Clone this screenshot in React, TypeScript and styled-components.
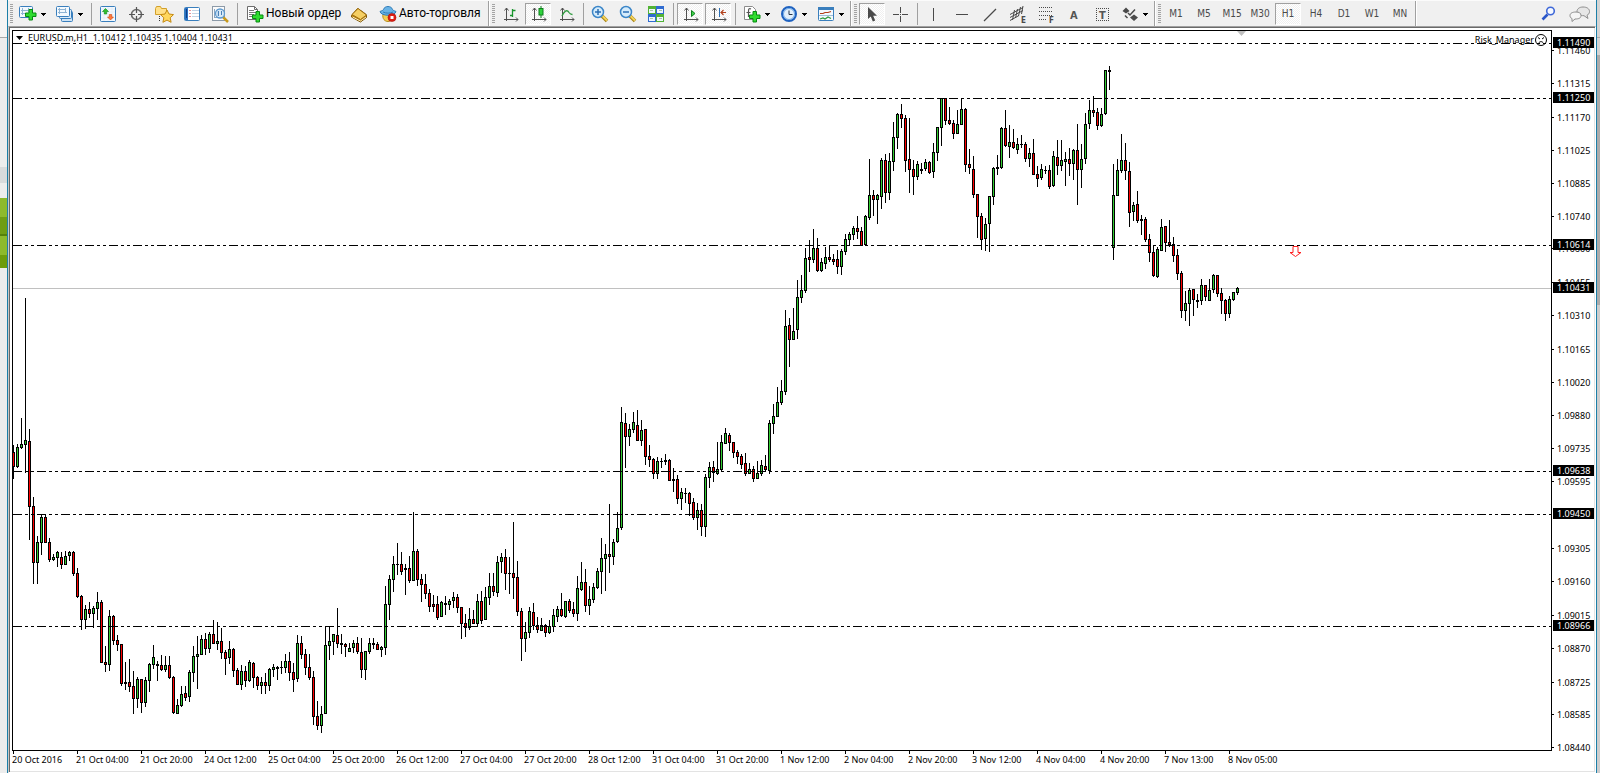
import React from 'react';
import styled, { createGlobalStyle, css } from 'styled-components';

const GlobalStyle = createGlobalStyle`
  * { box-sizing: border-box; }
  body { margin: 0; background: #fff; }
  button { font: inherit; color: inherit; }
`;

const CHART_FONT = '"Noto Sans", "DejaVu Sans Condensed", sans-serif';
const UI_FONT = '"DejaVu Sans Condensed", "DejaVu Sans", sans-serif';
const CAPTION_FONT = 'Roboto, "Open Sans", sans-serif';

/* ---------- window ---------- */

const Page = styled.div`
  display: flex;
  min-height: 100vh;
  font-family: ${CHART_FONT};
  font-size: 9px;
  color: #000;
`;

const DesktopLeft = styled.div`
  flex: none;
  width: 7px;
  background: linear-gradient(
    #f4f4f4 0 37px, #a8a8a8 37px 38px, #ededed 38px 167px, #d9dbdc 167px 183px,
    #ededed 183px 198px, #8dba2c 198px 217px, #6f9d14 217px 234px, #55800a 234px 236px,
    #8dba2c 236px 255px, #6d9c0c 255px 268px, #ededed 268px
  );
`;

const DesktopRight = styled.div`
  flex: none;
  width: 3px;
  background: linear-gradient(
    #d4d4d4 0 37px, #a8a8a8 37px 38px, #d4d4d4 38px 55px, #ababab 55px 305px, #cdcdcd 305px
  );
`;

const Window = styled.main`
  flex: 1;
  min-width: 0;
  display: flex;
  flex-direction: column;
  border: solid #1c7fa8;
  border-width: 0 1px;
  background: #fff;
`;

/* ---------- toolbar ---------- */

const Toolbar = styled.header`
  display: flex;
  align-items: center;
  height: 26px;
  padding-right: 2px;
  background: #f0f0f0;
  border-top: 1px solid #fbfbfb;
`;

const Group = styled.div`
  display: flex;
  align-items: center;
  height: 25px;
  padding-right: 1px;
  border-right: 1px solid #a0a0a0;
  box-shadow: 1px 0 #fff;
  margin-right: 2px;

  &:first-child {
    padding-left: 1px;
  }
`;

const Gripper = styled.span`
  width: 4px;
  height: 20px;
  margin: 0 0 0 1px;
  border-right: 1px solid #f0f0f0;
  background: repeating-linear-gradient(#a3a3a3 0 1px, #f0f0f0 1px 2px);
`;

const Separator = styled.span`
  width: 1px;
  height: 22px;
  margin: 0 2px 0 3px;
  background: #a0a0a0;
`;

const pressed = css`
  border-color: #a0a0a0 #fff #fff #a0a0a0;
  background: repeating-conic-gradient(#fff 0 25%, #f0f0f0 0 50%) 0 0 / 2px 2px;
`;

const ToolButton = styled.button<{ $pressed?: boolean }>`
  display: flex;
  align-items: center;
  justify-content: center;
  flex: none;
  width: 26px;
  height: 22px;
  margin: 0 1px;
  padding: 1px 0 0;
  border: 1px solid transparent;
  background: none;
  font-family: ${UI_FONT};
  color: #4a4a4a;
  ${(p) => p.$pressed && pressed}
`;

const PeriodButton = styled(ToolButton)`
  font-size: 10px;
  line-height: 12px;
`;

const MenuButton = styled(ToolButton)`
  justify-content: flex-start;
  gap: 4px;
  width: 35px;
  padding-left: 3px;
`;

const CaptionButton = styled(ToolButton)<{ $wide?: boolean }>`
  justify-content: flex-start;
  gap: 2px;
  width: ${(p) => (p.$wide ? 112 : 103)}px;
  padding-left: 4px;
  font-family: ${CAPTION_FONT};
  font-size: 12px;
  line-height: 16px;
  color: #000;
  white-space: nowrap;
`;

const Caption = styled.span`
  padding-bottom: 2px;
`;

const ToolbarEnd = styled.div`
  display: flex;
  gap: 3px;
  margin-left: auto;
`;

const Glyph = styled.svg`
  flex: none;
  display: block;
  overflow: visible;
`;

const Icon = ({ children, w = 18 }: { children: React.ReactNode; w?: number }) => (
  <Glyph width={w} height="18" viewBox={`0 0 ${w} 18`} fill="none" aria-hidden="true">
    {children}
  </Glyph>
);

const Caret = () => (
  <Glyph width="5" height="3" viewBox="0 0 5 3" shapeRendering="crispEdges" aria-hidden="true">
    <path d="M0 0h5v1h-1v1h-1v1h-1v-1h-1v-1h-1z" fill="#000" />
  </Glyph>
);

const Plus = ({ x, y }: { x: number; y: number }) => (
  <path
    transform={`translate(${x} ${y})`}
    d="M4 .5h3.500v3.500h3.500v3.500h-3.500v3.500h-3.500v-3.500h-3.500v-3.500h3.500z"
    fill="#2fdc2f"
    stroke="#078a12"
  />
);

const Frame = ({ x, y, w, h, fill = '#f3f9fe' }: { x: number; y: number; w: number; h: number; fill?: string }) => (
  <rect x={x + 0.5} y={y + 0.5} width={w - 1} height={h - 1} rx="1" fill={fill} stroke="#3a7fbd" />
);

/* Grey L-shaped axes shared by the chart icons; what is drawn inside them shifts along. */
const AxesIcon = ({ children }: { children: React.ReactNode }) => (
  <Icon>
    <g transform="translate(2 0)">
      <g stroke="#505050">
        <path d="M3.500 3v13M1 14.500h14" />
        <path d="M1.500 5.500l2-2.500 2 2.500M13 12.500l2 2-2 2" />
      </g>
      {children}
    </g>
  </Icon>
);

const Lens = ({ minus }: { minus?: boolean }) => (
  <>
    <path d="M10.500 10.500l5.500 5.500" stroke="#a88414" strokeWidth="3.500" />
    <path d="M11 10.500l5 5" stroke="#f3d35a" strokeWidth="2" />
    <circle cx="7" cy="7" r="5.500" fill="#d6ecfb" stroke="#3c86c8" strokeWidth="1.500" />
    <path d={minus ? 'M4 7h6' : 'M4 7h6M7 4v6'} stroke="#2c6fb4" strokeWidth="1.500" />
  </>
);

const NewChartIcon = () => (
  <Icon>
    <Frame x={0} y={1} w={14} h={12} />
    <path d="M3.500 3v7M2 8.500h9M2 5.500h8M9.500 3v4" stroke="#8fb4d4" />
    <Plus x={6} y={4} />
  </Icon>
);
const ProfilesIcon = () => (
  <Icon>
    <Frame x={5} y={6} w={12} h={11} fill="#cfe4f5" />
    <Frame x={3} y={4} w={13} h={10} fill="#dcecf8" />
    <Frame x={0} y={1} w={14} h={11} />
    <path d="M3.500 3v6M2 7.500h9M2 4.500h8M9.500 3v4" stroke="#8fb4d4" />
  </Icon>
);
const MarketWatchIcon = () => (
  <Icon>
    <Frame x={1} y={1} w={16} h={16} />
    <path d="M2 4h14M2 7h14M2 10h14M2 13h14M5 2v14M9 2v14M13 2v14" stroke="#dbe7f0" strokeWidth=".5" />
    <path d="M6.500 3.500l3 3h-1.800v2.500h-2.400v-2.500h-1.800z" fill="#2fc02f" stroke="#0c8a18" strokeWidth=".6" />
    <path d="M11.500 15l-3-3h1.800v-2.500h2.400v2.500h1.800z" fill="#ff7a3c" stroke="#d2430c" strokeWidth=".6" />
  </Icon>
);
const CrosshairIcon = () => (
  <Icon>
    <circle cx="9.500" cy="9.500" r="5" stroke="#6a6a6a" strokeWidth="1.600" />
    <path d="M9.500 2v6M9.500 11v6M2 9.500h6M11 9.500h6" stroke="#555" strokeWidth="1.200" />
  </Icon>
);
const NavigatorIcon = () => (
  <Icon w={20}>
    <path d="M1.500 3.500l1-2h4l1 2h5v6h-11z" fill="#ffe08a" stroke="#d2a02a" />
    <path d="M5.500 11v6" stroke="#333" strokeDasharray="1 1" />
    <path d="M13 5l2 4 4.500.6-3.300 3.200.9 4.500-4.100-2.200-4.100 2.200.9-4.500-3.300-3.200 4.500-.6z" fill="#ffd75e" stroke="#c58a12" />
  </Icon>
);
const TerminalIcon = () => (
  <Icon>
    <Frame x={1} y={2} w={16} h={14} fill="#fff" />
    <rect x="2" y="3" width="3" height="12" fill="#2c72c4" />
    <path d="M6.500 5.500h1M6.500 8.500h1M6.500 11.500h1" stroke="#c23" />
    <path d="M9 5.500h7M9 8.500h7M9 11.500h7" stroke="#c2d4e4" />
    <path d="M3.500 4v9" stroke="#0c3f86" />
  </Icon>
);
const TesterIcon = () => (
  <Icon>
    <rect x="1.500" y="1.500" width="12" height="14" fill="#fbfbfb" stroke="#8c9aa8" />
    <path d="M3.500 4v9M6.500 4v9M3 12.500h9" stroke="#8aa5c0" />
    <path d="M12 12l5 5" stroke="#c99a1c" strokeWidth="2.500" />
    <circle cx="9" cy="8.500" r="4.500" fill="#cfe6f8" fillOpacity=".8" stroke="#5f9bd0" strokeWidth="1.300" />
    <path d="M7.500 6v5M10.500 6v4" stroke="#4a80b8" />
  </Icon>
);
const NewOrderIcon = () => (
  <Icon>
    <path d="M1.500 1.500h7l3 3v10h-10z" fill="#fff" stroke="#6d6d6d" />
    <path d="M8.500 1.500v3h3" stroke="#6d6d6d" />
    <path d="M3 5.500h5M3 7.500h7M3 9.500h5M3 11.500h4" stroke="#777" />
    <Plus x={6} y={6} />
  </Icon>
);
const EditorIcon = () => (
  <Icon>
    <path d="M1.500 10.500l6-7c1 .5 8 5 9 6.500v2.500l-6 4.500-9-5z" fill="#b9820f" stroke="#7d5506" />
    <path d="M2 9.500l6-6 8.500 6.500-6 4.500z" fill="#f5cf63" stroke="#a06f10" />
    <path d="M2.500 12l8 4 5.500-4" stroke="#fbe9b4" />
  </Icon>
);
const AutoTradeIcon = () => (
  <Icon>
    <path d="M4 9c-1 5 2 7.500 5 7.500s6-3 5-7.500z" fill="#f2cd55" stroke="#b98d1a" />
    <path d="M1 6.500c2-1 3-1 3.500-2 1-4 8-4 9 0 .5 1 1.500 1 3.500 2-1 5-15 5-16 0z" fill="#69b3e6" stroke="#2f7cb8" />
    <path d="M4 7c3 1.500 7 1.500 10 0" stroke="#2f7cb8" />
    <circle cx="13" cy="12.500" r="4" fill="#e01f14" stroke="#a80f08" strokeWidth=".6" />
    <rect x="11.500" y="11" width="3" height="3" fill="#fff" />
  </Icon>
);
const BarChartIcon = () => (
  <AxesIcon>
    <path d="M9.500 4v8M7 10.500h2M10 5.500h2.500" stroke="#18942c" strokeWidth="1.300" />
  </AxesIcon>
);
const CandleChartIcon = () => (
  <AxesIcon>
    <path d="M10 1v12" stroke="#0d7f1c" />
    <rect x="8" y="3.500" width="4" height="6.500" fill="#2fd43c" stroke="#0d7f1c" />
  </AxesIcon>
);
const LineChartIcon = () => (
  <AxesIcon>
    <path d="M3 11c2-5 5-7 7-3.500 1 1.500 2 2 3.500 2" stroke="#2c9a3c" strokeWidth="1.300" />
  </AxesIcon>
);
const ZoomInIcon = () => (
  <Icon>
    <Lens />
  </Icon>
);
const ZoomOutIcon = () => (
  <Icon>
    <Lens minus />
  </Icon>
);
const TileIcon = () => (
  <Icon>
    <path d="M1 1h8v8h-8zM9 9h8v8h-8z" fill="#52b335" />
    <path d="M9 1h8v8h-8zM1 9h8v8h-8z" fill="#2f6bd0" />
    <path d="M2 4h6v4h-6zM10 4h6v4h-6zM2 12h6v4h-6zM10 12h6v4h-6z" fill="#eef6ff" />
    <path d="M3 5.500h3M12 5.500h3M3 13.500h3M12 13.500h3" stroke="#a9c6a9" />
  </Icon>
);
const AutoScrollIcon = () => (
  <AxesIcon>
    <path d="M8.500 5.500v6l3.500-3z" fill="#3fd24a" stroke="#0d7f1c" />
  </AxesIcon>
);
const ShiftIcon = () => (
  <AxesIcon>
    <path d="M8.500 3v9" stroke="#2c6fb4" />
    <path d="M10 7.500h5M12.500 5l-2.500 2.500 2.500 2.500" stroke="#b3411c" strokeWidth="1.200" />
  </AxesIcon>
);
const IndicatorsIcon = () => (
  <Icon>
    <path d="M1.500 1.500h8l3 3v10h-11z" fill="#fff" stroke="#8c8c8c" />
    <path d="M8 4c-2-1-2.500 0-2.500 2v6M3.500 7.500h4" stroke="#555" strokeWidth="1.200" />
    <Plus x={6} y={6} />
  </Icon>
);
const PeriodsIcon = () => (
  <Icon>
    <circle cx="9" cy="9" r="7" fill="#e3f0fc" stroke="#1f62c0" strokeWidth="2" />
    <circle cx="9" cy="9" r="5.500" stroke="#6aa6e6" />
    <path d="M9 5.500v4h3.500" stroke="#27364a" />
  </Icon>
);
const TemplateIcon = () => (
  <Icon>
    <Frame x={1} y={2} w={16} h={14} />
    <rect x="1" y="2" width="16" height="3" fill="#3a7fbd" />
    <path d="M3 8.500h3l2-1h3l3-1" stroke="#b3411c" strokeWidth="1.200" />
    <path d="M2 10.500h14" stroke="#9fbdd6" />
    <path d="M3 14l3-1 2 1 3-2 3 1.500" stroke="#2c9a3c" strokeWidth="1.200" />
  </Icon>
);
const CursorIcon = () => (
  <Icon>
    <path d="M5 2v12l2.800-2.500 2 5 2.400-1-2-4.700h3.800z" fill="#4a4a4a" />
  </Icon>
);
const CrossIcon = () => (
  <Icon>
    <path d="M9.500 2v6M9.500 11v6M2 9.500h6M11 9.500h6M9 9.500h1" stroke="#4a4a4a" />
  </Icon>
);
const VLineIcon = () => (
  <Icon>
    <path d="M8.500 3v13" stroke="#4a4a4a" />
  </Icon>
);
const HLineIcon = () => (
  <Icon>
    <path d="M3 9.500h12" stroke="#4a4a4a" />
  </Icon>
);
const TrendIcon = () => (
  <Icon>
    <path d="M3 16l12-12" stroke="#4a4a4a" strokeWidth="1.200" />
  </Icon>
);
const ChannelIcon = () => (
  <Icon>
    <path
      d="M1 9.500l13-7M1 12.500l13-7M1 15.500l9-5M5.500 5l-2 10M8.500 4l-2 9M11.500 2l-2 9M14 1l-1.500 8"
      stroke="#4a4a4a"
    />
    <text x="12" y="18" fontSize="8" fontWeight="bold" fill="#4a4a4a">E</text>
  </Icon>
);
const FibonacciIcon = () => (
  <Icon>
    <path
      d="M2 2.500h14M2 6.500h14M2 10.500h14M2 14.500h8"
      stroke="#4a4a4a"
      strokeDasharray="1 1"
      shapeRendering="crispEdges"
    />
    <text x="12" y="18" fontSize="8" fontWeight="bold" fill="#4a4a4a">F</text>
  </Icon>
);
const TextIcon = () => (
  <Icon>
    <text x="5" y="14" fontSize="11" fontWeight="bold" fill="#555">A</text>
  </Icon>
);
const LabelIcon = () => (
  <Icon>
    <path
      d="M3 3.500h13M3 15.500h13M3.500 3v13M15.500 3v13"
      stroke="#4a4a4a"
      strokeDasharray="1 1"
      shapeRendering="crispEdges"
    />
    <text x="6" y="14" fontSize="11" fontWeight="bold" fill="#555">T</text>
  </Icon>
);
const ArrowsIcon = () => (
  <Icon>
    <path d="M5 2.500l3.500 3.500-3.500 2.500-3.500-2.500zM13 9.500l4 3-4 3.500-4-3.500z" fill="#4a4a4a" />
    <path d="M4 10.500l2.500 2.500M7 8l2 2 5-5.500" stroke="#4a4a4a" strokeWidth="1.500" />
  </Icon>
);
const SearchIcon = () => (
  <Icon>
    <path d="M2.500 14.500l5-5" stroke="#2a56c8" strokeWidth="2.600" />
    <circle cx="10.500" cy="6" r="3.800" fill="#f4f8ff" stroke="#3f68d8" strokeWidth="1.600" />
  </Icon>
);
const ChatIcon = () => (
  <Icon w={22}>
    <path d="M14 2c4 0 6.500 1.800 6.500 4.500 0 2-1 3-2.500 3.700l1 3.300-4-2.800c-4 0-7-1.500-7-4.200s2.500-4.500 6-4.500z" fill="#e6e6e6" stroke="#8d8d8d" />
    <path d="M7 7c-4 0-6 1.500-6 3.500s1 2.500 2 3l0 3 3-2.500c4 0 6-1 6-3.500s-2-3.500-5-3.500z" fill="#f6f6f6" stroke="#8d8d8d" />
  </Icon>
);

/* ---------- chart ---------- */

const ChartFrame = styled.section`
  display: flex;
  flex-direction: column;
  flex: 1;
  padding: 2px 0 0 2px;
  border: 1px solid;
  border-color: #a0a0a0 #fff #fff #c8c8c8;
  box-shadow: inset 1px 1px #696969, inset -1px -1px #e3e3e3;
`;

const ChartBody = styled.div`
  display: flex;
  padding: 1px 1px 0;
`;

const Plot = styled.div`
  position: relative;
  flex: 1;
  min-width: 0;
  height: 721px;
  border: 1px solid #000;
  overflow: hidden;
`;

const PlotSvg = styled.svg`
  display: block;
  width: 100%;
  height: 719px;
`;

const ChartTitle = styled.h1`
  position: absolute;
  top: 1px;
  left: 3px;
  display: flex;
  align-items: center;
  gap: 5px;
  margin: 0;
  font-size: 9px;
  font-weight: normal;
  line-height: 12px;
  white-space: pre;
`;

const Expert = styled.div`
  position: absolute;
  top: 3px;
  right: 4px;
  display: flex;
  align-items: center;
  gap: 1px;
  line-height: 12px;
`;

const PriceAxis = styled.svg`
  flex: none;
  display: block;
  width: 42px;
  height: 721px;
  overflow: visible;
`;

const TimeAxis = styled.ol`
  display: flex;
  height: 20px;
  margin: 0 0 0 1px;
  padding: 0;
  list-style: none;
  overflow: hidden;
`;

const TimeMark = styled.li`
  flex: none;
  width: 64px;
  line-height: 12px;
  white-space: nowrap;

  &::before {
    content: '';
    display: block;
    width: 1px;
    height: 3px;
    margin-left: 1px;
    background: #000;
  }
`;

const PLOT_TOP = 31;
const PITCH = 4;
const TOP_PRICE = 111490;
const TOP_ROW = 42.9;
const ROWS_PER_POINT = 0.231;

const priceRow = (points: number) => Math.round(TOP_ROW + (TOP_PRICE - points) * ROWS_PER_POINT) - 30;
const priceText = (points: number) => (points / 100000).toFixed(5);

const LEVELS = [111490, 111250, 110614, 109638, 109450, 108966];
const BID = 110431;
const SCALE = [
  111460, 111315, 111170, 111025, 110885, 110740, 110600, 110455, 110310, 110165, 110020,
  109880, 109735, 109595, 109305, 109160, 109015, 108870, 108725, 108585, 108440,
];
const TIMES = [
  '20 Oct 2016', '21 Oct 04:00', '21 Oct 20:00', '24 Oct 12:00', '25 Oct 04:00', '25 Oct 20:00',
  '26 Oct 12:00', '27 Oct 04:00', '27 Oct 20:00', '28 Oct 12:00', '31 Oct 04:00', '31 Oct 20:00',
  '1 Nov 12:00', '2 Nov 04:00', '2 Nov 20:00', '3 Nov 12:00', '4 Nov 04:00', '4 Nov 20:00',
  '7 Nov 13:00', '8 Nov 05:00',
];

/* One bar per entry: high, body top, body bottom, low (screen rows), then g = up, r = down, d = flat. */
const BARS = `
445 452 467 479 r,444 447 467 468 g,418 444 448 449 g,298 440 445 473 g,429 441 507 540 r,497 506 563 584 r,
536 542 563 584 g,514 517 543 555 g,514 517 543 543 r,538 542 560 562 r,554 557 560 561 g,551 552 558 567 g,
552 557 565 569 r,551 556 565 565 g,551 552 556 561 g,551 552 574 576 r,568 573 597 598 r,595 596 620 630 r,
605 609 620 629 g,602 609 614 618 r,606 608 614 628 g,592 602 609 620 g,600 602 663 663 r,646 662 665 672 r,
610 616 665 671 g,615 616 641 645 r,635 640 645 651 r,644 644 684 686 r,662 682 684 690 r,659 682 687 692 r,
671 686 699 714 r,677 679 699 708 g,679 679 703 713 r,677 680 703 707 g,663 664 681 692 g,645 657 665 669 g,
661 664 666 681 r,655 665 670 671 r,656 665 670 672 g,656 665 678 679 r,676 677 713 714 r,699 705 714 714 g,
686 694 706 707 g,686 693 698 701 r,670 672 697 702 g,646 656 673 682 g,636 654 657 689 g,635 639 655 655 g,
633 639 649 655 r,632 634 649 653 g,620 634 644 644 r,622 641 644 650 g,628 641 653 659 r,650 652 659 675 r,
641 649 658 664 g,648 649 671 677 r,668 670 685 685 r,665 671 685 690 g,666 671 681 687 r,660 662 681 682 g,
662 663 678 688 r,676 677 686 690 r,677 682 686 694 g,673 682 686 694 r,668 669 686 691 g,664 667 670 677 g,
666 667 669 680 r,661 667 668 674 d,654 661 668 673 g,652 661 673 681 r,663 672 680 692 r,635 643 679 682 g,
636 643 655 659 r,649 654 668 675 r,654 667 678 680 r,671 677 717 725 r,701 716 726 730 r,706 714 726 733 g,
626 645 714 714 g,626 641 646 660 g,634 634 642 655 g,608 635 644 648 r,634 643 645 654 r,643 644 647 657 r,
643 648 652 652 g,640 643 648 653 g,637 643 652 654 r,638 652 670 678 r,651 651 670 680 g,638 643 652 654 g,
638 643 645 649 r,642 644 650 650 r,646 647 650 657 g,586 604 648 655 g,575 579 605 620 g,556 564 580 592 g,
543 564 565 575 d,552 564 572 575 r,564 568 570 595 r,556 568 581 583 r,512 551 581 581 g,549 551 580 586 r,
574 579 585 602 r,574 584 594 599 r,589 593 607 612 r,595 604 607 612 r,596 604 618 620 r,601 602 617 617 g,
596 603 605 615 r,599 601 605 610 g,592 597 601 608 g,594 597 608 613 r,607 607 624 639 r,614 623 628 637 r,
608 619 628 630 g,610 619 624 624 r,594 601 624 627 g,591 601 621 624 r,587 597 620 620 g,573 586 598 605 g,
573 586 592 596 r,556 562 593 597 g,553 557 562 573 g,549 557 574 590 r,557 573 574 594 d,522 573 578 599 r,
561 577 612 616 r,608 611 639 661 r,622 632 639 652 g,607 611 633 638 g,603 612 626 630 r,617 625 630 633 r,
618 625 631 631 g,624 625 633 637 r,620 626 633 634 g,609 615 627 632 g,606 609 617 622 g,593 609 616 617 r,
601 601 617 618 g,599 601 611 613 r,602 609 614 617 r,576 588 614 621 g,562 582 590 591 g,569 582 606 612 r,
586 599 606 615 g,583 587 600 603 g,568 571 588 589 g,538 558 572 594 g,544 554 559 591 g,504 554 557 573 r,
539 542 557 565 g,512 528 542 543 g,407 422 528 530 g,413 423 437 468 r,424 429 437 446 g,412 422 430 433 g,
410 425 441 441 r,420 430 441 446 g,429 429 457 465 r,445 456 460 467 r,458 459 474 479 r,457 461 474 479 g,
458 461 462 468 d,454 460 462 465 r,459 460 481 481 r,468 479 481 492 r,475 479 499 504 r,488 492 499 510 g,
488 493 494 503 d,492 493 504 516 r,498 502 518 520 r,503 510 518 530 g,504 510 527 536 r,474 477 527 537 g,
462 467 478 488 g,461 467 473 482 r,442 469 474 475 g,435 442 470 472 g,428 433 444 444 g,433 435 443 451 r,
442 442 453 458 r,450 452 457 464 r,454 456 465 469 r,453 463 474 476 r,463 469 474 474 g,466 469 479 482 r,
461 473 479 479 g,460 465 474 476 g,455 466 470 471 r,420 423 471 474 g,404 416 424 434 g,387 402 417 417 g,
380 391 403 405 g,310 326 392 395 g,318 325 340 367 r,308 331 340 340 g,280 297 330 339 g,275 290 298 303 g,
248 258 291 293 g,240 257 260 272 r,229 248 260 263 g,238 248 271 272 r,258 262 271 272 g,247 257 264 269 g,
245 257 260 262 r,254 259 262 265 r,250 259 267 274 r,249 251 267 275 g,234 239 252 255 g,232 234 240 245 g,
226 228 235 240 g,216 228 232 239 r,227 231 246 246 r,215 216 245 246 g,159 195 218 220 g,190 195 200 216 r,
194 195 200 224 g,158 160 197 209 g,154 160 193 203 r,153 161 193 200 g,122 137 162 171 g,113 114 138 149 g,
104 114 119 128 r,115 118 161 172 r,118 159 170 193 r,160 169 177 195 r,161 164 177 180 g,163 169 171 174 d,
159 162 169 171 g,161 162 173 174 r,143 152 172 178 g,127 127 153 161 g,98 98 128 146 g,98 98 121 125 r,
107 120 124 125 r,120 123 134 139 r,110 124 134 134 g,98 109 125 125 g,108 109 165 172 r,149 164 168 174 r,
156 169 195 198 r,194 194 217 238 r,213 216 240 250 r,218 224 239 251 g,196 196 224 252 g,167 168 197 205 g,
155 167 169 175 d,127 128 168 169 g,110 128 146 147 r,125 142 147 158 g,129 142 148 149 r,138 144 150 154 g,
135 144 145 148 d,142 144 159 162 r,148 153 159 167 g,139 153 175 175 r,166 174 179 187 r,164 169 178 180 g,
166 170 171 174 d,165 170 187 189 r,151 156 186 187 g,140 157 166 175 r,140 160 166 171 g,152 159 162 186 g,
148 159 164 176 r,149 150 164 180 g,124 150 170 205 r,144 159 170 188 g,113 124 159 164 g,100 110 124 129 g,
96 110 113 117 r,108 112 126 130 r,108 114 126 127 g,70 70 114 115 g,66 70 72 90 d,164 195 248 260 g,
159 170 196 196 g,134 160 171 173 g,143 160 171 180 r,162 171 213 227 r,202 205 212 221 g,191 204 221 223 r,
215 219 221 235 d,217 219 240 242 r,234 239 253 262 r,245 252 276 277 r,247 249 277 278 g,219 227 251 251 g,
226 226 243 252 r,220 242 245 247 r,237 244 256 262 r,249 255 274 280 r,271 273 311 318 r,291 303 311 321 g,
288 290 304 326 g,289 289 300 316 r,294 300 302 308 d,279 285 301 305 g,285 285 297 301 r,279 290 301 301 g,
274 275 290 293 g,275 275 294 297 r,288 293 301 314 r,299 300 314 321 r,296 299 314 318 g,292 292 300 301 g,
287 288 293 295 g`
  .split(',')
  .map((entry) => {
    const [high, top, bottom, low, kind] = entry.trim().split(' ');
    return { high: +high - PLOT_TOP, top: +top - PLOT_TOP, bottom: +bottom - PLOT_TOP, low: +low - PLOT_TOP, kind };
  });

const Candles = () => (
  <g shapeRendering="crispEdges">
    {BARS.map((bar, i) => (
      <React.Fragment key={i}>
        <rect x={i * PITCH} y={bar.high} width="1" height={bar.low - bar.high} />
        <rect x={i * PITCH - 1} y={bar.top} width="3" height={bar.bottom - bar.top} />
        {bar.bottom - bar.top > 2 && (
          <rect
            x={i * PITCH}
            y={bar.top + 1}
            width="1"
            height={bar.bottom - bar.top - 2}
            fill={bar.kind === 'r' ? '#ff0000' : '#32cd32'}
          />
        )}
      </React.Fragment>
    ))}
  </g>
);

const Level = ({ points }: { points: number }) => (
  <line x1="0" x2="100%" y1={priceRow(points) - 0.5} y2={priceRow(points) - 0.5} stroke="#000" strokeDasharray="9 3 3 3 3 3" />
);

const PERIODS = ['M1', 'M5', 'M15', 'M30', 'H1', 'H4', 'D1', 'W1', 'MN'];

export default function App() {
  return (
    <>
      <GlobalStyle />
      <Page>
        <DesktopLeft />
        <Window>
          <Toolbar>
            <Group>
              <Gripper />
              <MenuButton aria-label="New chart"><NewChartIcon /><Caret /></MenuButton>
              <MenuButton aria-label="Profiles"><ProfilesIcon /><Caret /></MenuButton>
              <Separator />
              <ToolButton aria-label="Market watch"><MarketWatchIcon /></ToolButton>
              <ToolButton aria-label="Data window"><CrosshairIcon /></ToolButton>
              <ToolButton aria-label="Navigator"><NavigatorIcon /></ToolButton>
              <ToolButton aria-label="Terminal"><TerminalIcon /></ToolButton>
              <ToolButton aria-label="Strategy tester"><TesterIcon /></ToolButton>
              <Separator />
              <CaptionButton><NewOrderIcon /><Caption>Новый ордер</Caption></CaptionButton>
              <ToolButton aria-label="Editor"><EditorIcon /></ToolButton>
              <CaptionButton $wide><AutoTradeIcon /><Caption>Авто-торговля</Caption></CaptionButton>
            </Group>
            <Group>
              <Gripper />
              <ToolButton aria-label="Bar chart"><BarChartIcon /></ToolButton>
              <ToolButton aria-label="Candlesticks" aria-pressed="true" $pressed><CandleChartIcon /></ToolButton>
              <ToolButton aria-label="Line chart"><LineChartIcon /></ToolButton>
              <Separator />
              <ToolButton aria-label="Zoom in"><ZoomInIcon /></ToolButton>
              <ToolButton aria-label="Zoom out"><ZoomOutIcon /></ToolButton>
              <ToolButton aria-label="Tile windows"><TileIcon /></ToolButton>
              <Separator />
              <ToolButton aria-label="Auto scroll" aria-pressed="true" $pressed><AutoScrollIcon /></ToolButton>
              <ToolButton aria-label="Chart shift" aria-pressed="true" $pressed><ShiftIcon /></ToolButton>
              <Separator />
              <MenuButton aria-label="Indicators"><IndicatorsIcon /><Caret /></MenuButton>
              <MenuButton aria-label="Periods"><PeriodsIcon /><Caret /></MenuButton>
              <MenuButton aria-label="Templates"><TemplateIcon /><Caret /></MenuButton>
            </Group>
            <Group>
              <Gripper />
              <ToolButton aria-label="Cursor" aria-pressed="true" $pressed><CursorIcon /></ToolButton>
              <ToolButton aria-label="Crosshair"><CrossIcon /></ToolButton>
              <Separator />
              <ToolButton aria-label="Vertical line"><VLineIcon /></ToolButton>
              <ToolButton aria-label="Horizontal line"><HLineIcon /></ToolButton>
              <ToolButton aria-label="Trend line"><TrendIcon /></ToolButton>
              <ToolButton aria-label="Channel"><ChannelIcon /></ToolButton>
              <ToolButton aria-label="Fibonacci"><FibonacciIcon /></ToolButton>
              <ToolButton aria-label="Text"><TextIcon /></ToolButton>
              <ToolButton aria-label="Text label"><LabelIcon /></ToolButton>
              <MenuButton aria-label="Arrows"><ArrowsIcon /><Caret /></MenuButton>
            </Group>
            <Group>
              <Gripper />
              {PERIODS.map((p) => (
                <PeriodButton key={p} $pressed={p === 'H1'} aria-pressed={p === 'H1'}>{p}</PeriodButton>
              ))}
            </Group>
            <ToolbarEnd>
              <ToolButton aria-label="Search"><SearchIcon /></ToolButton>
              <ToolButton aria-label="Messages"><ChatIcon /></ToolButton>
            </ToolbarEnd>
          </Toolbar>
          <ChartFrame>
            <ChartBody>
              <Plot>
                <PlotSvg role="img" aria-label="EURUSD H1 candlestick chart">
                  <rect x="0" y={priceRow(BID) - 1} width="100%" height="1" fill="#c0c0c0" />
                  <path d="M1224 0h9l-4.500 5z" fill="#c0c0c0" />
                  <Candles />
                  {LEVELS.map((p) => <Level key={p} points={p} />)}
                  <path d="M1280 215.500h5v6h3l-5.500 4-5.500-4h3z" fill="#fff" stroke="#ff2020" />
                </PlotSvg>
                <ChartTitle>
                  <Glyph width="7" height="4" viewBox="0 0 7 4" aria-hidden="true">
                    <path d="M0 0h7l-3.500 4z" />
                  </Glyph>
                  {'EURUSD.m,H1  1.10412 1.10435 1.10404 1.10431'}
                </ChartTitle>
                <Expert>
                  Risk_Manager
                  <Glyph width="12" height="12" viewBox="0 0 12 12" fill="none" stroke="#000" aria-hidden="true">
                    <circle cx="6" cy="6" r="5.500" />
                    <path d="M3.500 9.500c1-2.500 4-2.500 5 0M3 3.500l2 1.500M9 3.500l-2 1.500" />
                  </Glyph>
                </Expert>
              </Plot>
              <PriceAxis fontFamily={CHART_FONT} fontSize="9">
                {SCALE.map((p) => (
                  <g key={p}>
                    <rect x="0" y={priceRow(p)} width="2" height="1" />
                    <text x="5" y={priceRow(p) + 4}>{priceText(p)}</text>
                  </g>
                ))}
                {[...LEVELS, BID].map((p) => (
                  <g key={p}>
                    <rect x="1" y={priceRow(p) - 6} width="41" height="11" />
                    <text x="5" y={priceRow(p) + 3} fill="#fff">{priceText(p)}</text>
                  </g>
                ))}
              </PriceAxis>
            </ChartBody>
            <TimeAxis>
              {TIMES.map((t) => <TimeMark key={t}>{t}</TimeMark>)}
            </TimeAxis>
          </ChartFrame>
        </Window>
        <DesktopRight />
      </Page>
    </>
  );
}
